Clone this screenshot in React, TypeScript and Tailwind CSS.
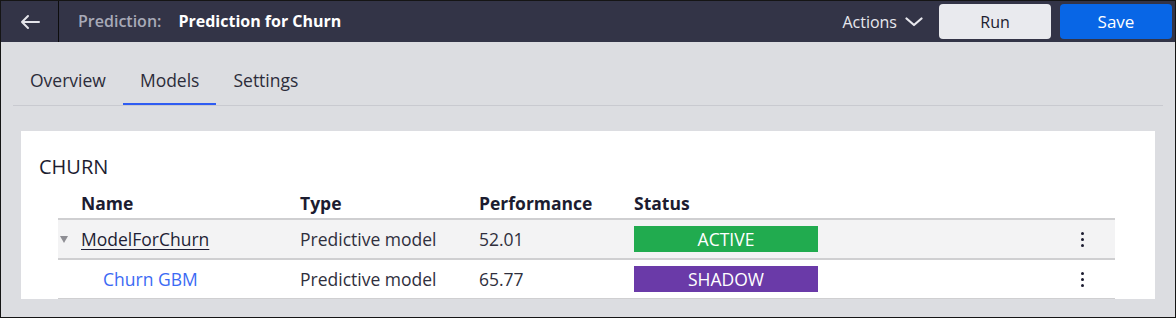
import React, { useState } from 'react';

const font = "font-['Open_Sans',sans-serif]";

interface ModelRow {
  name: string;
  type: string;
  performance: string;
  status: 'ACTIVE' | 'SHADOW';
  child?: boolean;
}

const ROWS: ModelRow[] = [
  { name: 'ModelForChurn', type: 'Predictive model', performance: '52.01', status: 'ACTIVE' },
  { name: 'Churn GBM', type: 'Predictive model', performance: '65.77', status: 'SHADOW', child: true },
];

const TABS = ['Overview', 'Models', 'Settings'];

const Kebab = () => (
  <div className="flex flex-col items-center gap-[3px]">
    <span className="w-[3px] h-[3px] rounded-full bg-[#1c1c30]" />
    <span className="w-[3px] h-[3px] rounded-full bg-[#1c1c30]" />
    <span className="w-[3px] h-[3px] rounded-full bg-[#1c1c30]" />
  </div>
);

export default function App() {
  const [tab, setTab] = useState('Models');

  return (
    <div className={`w-[1176px] h-[318px] border border-[#151515] bg-[#dcdde1] flex flex-col overflow-hidden ${font}`}>
      {/* top bar */}
      <header className="h-[41px] shrink-0 bg-[#333447] flex items-center">
        <button className="w-[58px] h-full border-r border-[#0d0d0d] flex items-center justify-center">
          <svg width="20" height="16" viewBox="0 0 20 16" fill="none" stroke="#e4e4ea" strokeWidth="2" strokeLinecap="round" strokeLinejoin="round">
            <path d="M19 8H2M8 2L2 8l6 6" />
          </svg>
        </button>
        <div className="pl-[19px] flex items-center gap-[17px] text-[16px] font-semibold -mt-[1px]">
          <span className="text-[#a8aab8]">Prediction:</span>
          <span className="text-white font-bold">Prediction for Churn</span>
        </div>
        <div className="ml-auto flex items-center pr-[3px]">
          <button className="flex items-center gap-[8px] text-[16px] text-[#e8e8ee] mr-[16px]">
            Actions
            <svg width="18" height="10" viewBox="0 0 18 10" fill="none" stroke="#e8e8ee" strokeWidth="2.2" strokeLinecap="round" strokeLinejoin="round">
              <path d="M1.5 1.5L9 8l7.5-6.5" />
            </svg>
          </button>
          <button className="w-[112px] h-[35px] rounded-[4px] bg-[#e9eaee] text-[#20202e] text-[16px]">Run</button>
          <button className="w-[112px] h-[35px] ml-[9px] rounded-[4px] bg-[#0866e6] text-white text-[17px]">Save</button>
        </div>
      </header>

      {/* tabs */}
      <nav className="mx-[12px] mt-[26px] flex border-b border-[#c9cad0]">
        {TABS.map(t => (
          <button
            key={t}
            onClick={() => setTab(t)}
            className={
              t === tab
                ? "px-[17px] pb-[11px] leading-[24px] text-[17.5px] text-[#2c2c3a] border-b-2 border-[#2f5cf2]"
                : "px-[17px] pb-[11px] leading-[24px] text-[17.5px] text-[#2c2c3a] border-b-2 border-transparent"
            }
          >
            {t}
          </button>
        ))}
      </nav>

      {/* card */}
      <section className="mx-[20px] mt-[25px] h-[168px] shrink-0 bg-white pt-[23px] pl-[18px] pr-[40px] overflow-hidden">
        <h2 className="text-[20px] leading-[26px] text-[#1c1c30]">CHURN</h2>
        <div className="ml-[19px]">
          <div className="grid grid-cols-[242px_179px_155px_1fr_66px] h-[40px] items-end pb-[3px] border-b-2 border-[#cfcfd1] text-[17.5px] leading-[24px] font-bold text-[#1c1c30]">
            <span className="pl-[23px]">Name</span>
            <span>Type</span>
            <span>Performance</span>
            <span>Status</span>
            <span />
          </div>
          {ROWS.map(r => (
            <div
              key={r.name}
              className={
                r.child
                  ? "grid grid-cols-[242px_179px_155px_1fr_66px] h-[40px] items-center border-b-2 border-[#cfcfd1] text-[17.5px] text-[#2f2f3d] bg-white"
                  : "grid grid-cols-[242px_179px_155px_1fr_66px] h-[40px] items-center border-b-2 border-[#cfcfd1] text-[17.5px] text-[#2f2f3d] bg-[#f3f3f4]"
              }
            >
              {r.child ? (
                <a className="pl-[45px] text-[#3b6af4]">{r.name}</a>
              ) : (
                <div className="flex items-center">
                  <svg className="ml-[2px]" width="8" height="7" viewBox="0 0 8 7">
                    <path d="M0 0h8L4 7z" fill="#8e8e94" />
                  </svg>
                  <a className="ml-[13px] underline underline-offset-[3px] decoration-1 text-[#1e1e35]">{r.name}</a>
                </div>
              )}
              <span>{r.type}</span>
              <span>{r.performance}</span>
              <div>
                <span
                  className={
                    r.status === 'ACTIVE'
                      ? "w-[184px] h-[26px] flex items-center justify-center bg-[#21ab4f] text-white text-[17.5px]"
                      : "w-[184px] h-[26px] flex items-center justify-center bg-[#6a3aa8] text-white text-[17.5px]"
                  }
                >
                  {r.status}
                </span>
              </div>
              <div className="flex justify-center">
                <Kebab />
              </div>
            </div>
          ))}
        </div>
      </section>
    </div>
  );
}
